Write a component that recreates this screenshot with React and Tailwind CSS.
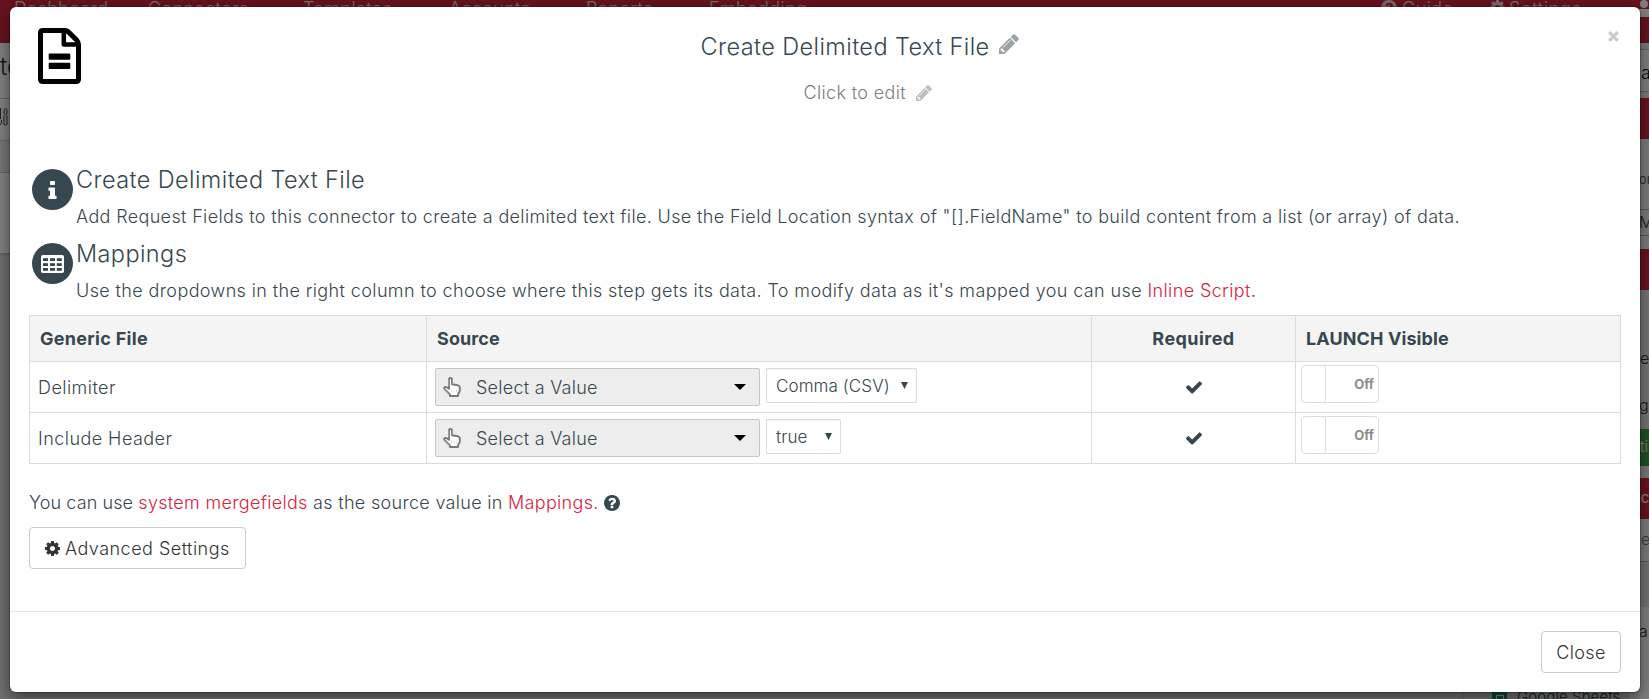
const PATHS = {
  pencil:
    'M491 1536l91-91-235-235-91 91v107h128v128h107zm523-928q0-22-22-22-10 0-17 7l-542 542q-7 7-7 17 0 22 22 22 10 0 17-7l542-542q7-7 7-17zm-54-192l416 416-832 832h-416v-416zm683 96q0 53-37 90l-166 166-416-416 166-165q36-38 90-38 53 0 91 38l235 234q37 39 37 91z',
  check:
    'M1671 566q0 40-28 68l-724 724-136 136q-28 28-68 28t-68-28l-136-136-362-362q-28-28-28-68t28-68l136-136q28-28 68-28t68 28l294 295 656-657q28-28 68-28t68 28l136 136q28 28 28 68z',
  cog: 'M1152 896q0-106-75-181t-181-75-181 75-75 181 75 181 181 75 181-75 75-181zm512-109v222q0 12-8 23t-20 13l-185 28q-19 54-39 91 35 50 107 138 10 12 10 25t-9 23q-27 37-99 108t-94 71q-12 0-26-9l-138-108q-44 23-91 38-16 136-29 186-7 28-36 28h-222q-14 0-24.500-8.500t-11.500-21.500l-28-184q-49-16-90-37l-141 107q-10 9-25 9-14 0-25-11-126-114-165-168-7-10-7-23 0-12 8-23 15-21 51-66.500t54-70.500q-27-50-41-99l-183-27q-13-2-21-12.500t-8-23.500v-222q0-12 8-23t19-13l186-28q14-46 39-92-40-57-107-138-10-12-10-24 0-10 9-23 26-36 98.500-107.500t94.500-71.500q13 0 26 10l138 107q44-23 91-38 16-136 29-186 7-28 36-28h222q14 0 24.500 8.500t11.500 21.500l28 184q49 16 90 37l142-107q9-9 24-9 13 0 25 10 129 119 165 170 7 8 7 22 0 12-8 23-15 21-51 66.500t-54 70.500q26 50 41 98l183 28q13 2 21 12.500t8 23.500z',
  question:
    'M1024 1376v-192q0-14-9-23t-23-9h-192q-14 0-23 9t-9 23v192q0 14 9 23t23 9h192q14 0 23-9t9-23zm256-672q0-88-55.500-163t-138.500-116-170-41q-243 0-371 213-15 24 8 42l132 100q7 6 19 6 16 0 25-12 53-68 86-92 34-24 86-24 48 0 85.500 26t37.500 59q0 38-20 61t-68 45q-63 28-115.500 86.500t-52.500 125.500v36q0 14 9 23t23 9h192q14 0 23-9t9-23q0-19 21.500-49.500t54.500-49.500q32-18 49-28.500t46-35 44.500-48 28-60.500 12.500-81zm384 192q0 209-103 385.500t-279.500 279.500-385.500 103-385.500-103-279.500-279.500-103-385.500 103-385.500 279.500-279.500 385.500-103 385.500 103 279.500 279.500 103 385.500z',
  info: 'M1216 1344v128q0 26-19 45t-45 19h-512q-26 0-45-19t-19-45v-128q0-26 19-45t45-19h64v-384h-64q-26 0-45-19t-19-45v-128q0-26 19-45t45-19h384q26 0 45 19t19 45v576h64q26 0 45 19t19 45zm-128-1152v192q0 26-19 45t-45 19h-256q-26 0-45-19t-19-45v-192q0-26 19-45t45-19h256q26 0 45 19t19 45z',
};

function Icon({ name, className, box = '0 0 1792 1792' }) {
  return (
    <svg viewBox={box} fill="currentColor" className={`shrink-0 ${className}`}>
      <path d={PATHS[name]} />
    </svg>
  );
}

function FileIcon() {
  return (
    <svg viewBox="0 0 43 56" className="h-14 w-[43px] shrink-0" fill="none" stroke="#000">
      <path
        strokeWidth="5"
        d="M5 2.500H27Q29 2.500 30.500 4L38.500 12Q40.500 14 40.500 16.500V51Q40.500 53.500 38 53.500H5Q2.500 53.500 2.500 51V5Q2.500 2.500 5 2.500Z"
      />
      <path strokeWidth="4.500" strokeLinejoin="round" d="M25.800 3V16.500H40" />
      <rect x="10.700" y="25.500" width="21.600" height="6.300" rx="1" fill="#000" stroke="none" />
      <rect x="10.700" y="34.800" width="21.600" height="6.300" rx="1" fill="#000" stroke="none" />
    </svg>
  );
}

function TableIcon() {
  return (
    <svg viewBox="0 0 23 18" className="h-[18px] w-[23px]">
      <rect width="23" height="18" rx="1.800" fill="#fff" />
      {[3.2, 8.2, 13].map((y) =>
        [2, 9, 15.8].map((x) => (
          <rect key={`${x}-${y}`} x={x} y={y} width="5" height="2.800" fill="#37474f" />
        ))
      )}
    </svg>
  );
}

function HandIcon() {
  return (
    <svg viewBox="0 0 18 20" className="h-5 w-[18px] shrink-0">
      <path
        d="M6 11.500V2.800Q6 1 7.500 1T9 2.800V7.200L14.800 8.300Q16.800 8.800 16.800 10.800V14L15 17.300V19H7V17.500L1.300 11.800Q.8 10.300 2.300 9.900Q3.500 9.800 6 11.800Z"
        fill="#fff"
        stroke="#77797c"
        strokeWidth="1.900"
        strokeLinejoin="round"
      />
      <path d="M1 12L6.500 17.600M5.600 2.500V9" stroke="#d9a679" strokeWidth=".7" fill="none" />
      <path d="M9.600 2.500V7" stroke="#8fb4e0" strokeWidth=".6" fill="none" />
      <path d="M8.500 12.500v3M11 12.500v3M13.500 12.500v3" stroke="#e0dcdc" strokeWidth="1" />
    </svg>
  );
}

function NavItem({ className, children }) {
  return <span className={`shrink-0 ${className}`}>{children}</span>;
}

function Backdrop() {
  return (
    <div className="flex h-full flex-col bg-[#dedede]">
      <nav className="flex h-[43px] shrink-0 bg-[#cf243a] pl-[14px] text-[18px] leading-[18px] font-light tracking-[0.35px] text-white/80">
        <NavItem className="w-[134px]">Dashboard</NavItem>
        <NavItem className="w-[155px]">Connectors</NavItem>
        <NavItem className="w-[146px]">Templates</NavItem>
        <NavItem className="w-[137px]">Accounts</NavItem>
        <NavItem className="w-[123px]">Reports</NavItem>
        <NavItem className="w-[672px]">Embedding</NavItem>
        <Icon name="question" box="128 128 1536 1536" className="h-4 w-4" />
        <NavItem className="ml-[5px] w-[88px]">Guide</NavItem>
        <Icon name="cog" box="128 128 1536 1536" className="h-[15px] w-[15px]" />
        <NavItem className="ml-1 w-[129px] tracking-[0.7px]">Settings</NavItem>
        <div className="flex w-4 flex-col items-center">
          <div className="h-2 w-2 rounded-full bg-white" />
          <div className="mt-px h-2 w-full bg-white" />
        </div>
      </nav>
      <div className="flex grow justify-between">
        <div className="flex w-[30px] flex-col text-[#263238]">
          <div className="h-[56px] overflow-hidden border-b border-[#c8c8c8] bg-white pt-2.5 text-2xl leading-7 font-light">to</div>
          <div className="h-[42px] border-b border-[#c8c8c8] bg-white pt-[9px]">
            <svg viewBox="0 0 10 18" className="h-[18px] w-[10px]" fill="none" stroke="#37474f">
              <path d="M.5 0v11M7 7.500v9q-1.500 1.500-3 0v-9M4 4q0-3.500 1.500-3.500t1.500 3.500-1.500 3-1.500-3M0 17l1.500-2v-3" />
            </svg>
          </div>
          <div className="h-8 border-b border-[#c8c8c8] bg-[#ebebeb]" />
          <div className="h-[81px] border-b border-[#bbb] bg-white shadow" />
        </div>
        <div className="flex w-[20px] flex-col overflow-hidden bg-[#f4f4f4] pl-[10px] text-[15px] font-light text-[#263238]">
          <div className="mt-1.5 h-[43px] border-y border-[#c8c8c8] bg-white pt-[13px] pl-0.5 text-lg leading-5 text-black">a</div>
          <div className="mt-1.5 h-[41px] bg-[#cf243a]" />
          <div className="h-[70px] pt-[30px] text-[13px] leading-5">on</div>
          <div className="h-[27px] border-y border-[#bbb] text-base leading-6">M</div>
          <div className="mt-[13px] h-[41px] bg-[#cf243a]" />
          <div className="h-[139px] bg-[#e8e8e8] pt-[58px] text-base leading-5">
            <div className="pl-px">e</div>
            <div className="mt-[27px]">ge</div>
          </div>
          <div className="h-[37px] bg-[#43a047] pt-2 pl-px leading-5 text-white">ti</div>
          <div className="mt-3 h-[41px] bg-[#cf243a] pt-2.5 leading-5 text-white">
            <div className="-ml-[7px] font-normal">ec</div>
          </div>
          <div className="h-[43px] border-b border-[#bbb] pt-2.5 pl-0.5 text-base leading-5 text-[#777]">e</div>
          <div className="h-[45px] bg-[#e4e4e4]" />
          <div className="h-[92px] bg-white pt-3 text-base leading-6">a</div>
        </div>
      </div>
    </div>
  );
}

function BottomStrip() {
  return (
    <div className="absolute top-[690px] left-[1463px] flex h-[9px] w-[186px] overflow-hidden border-l border-[#c8c8c8] pl-7 font-light">
      <div className="flex w-[15px] items-end justify-center bg-[#0f9d58]">
        <div className="h-1 w-2 border border-b-0 border-white" />
      </div>
      <span className="-mt-[5px] ml-[10px] text-[15px] leading-6 tracking-[0.1px] whitespace-nowrap text-[#263238]">
        Google Sheets
      </span>
    </div>
  );
}

function Section({ icon, title, children, textClass = '' }) {
  return (
    <section className="flex h-[74px] pl-[3px]">
      <div className="mt-[7px] mr-[3px] flex h-[41px] w-[41px] shrink-0 items-center justify-center rounded-full bg-[#37474f] text-white">
        {icon}
      </div>
      <div className="whitespace-nowrap">
        <h4 className="mt-[5px] text-[23.5px] leading-[26px] font-light tracking-[0.4px]">{title}</h4>
        <p className={`mt-[11px] leading-[26px] ${textClass}`}>{children}</p>
      </div>
    </section>
  );
}

function Cell({ className = '', children }) {
  return <div className={`flex border-r border-b border-[#dcdcdc] ${className}`}>{children}</div>;
}

function Row({ label, value, selectClass }) {
  return (
    <>
      <Cell className="items-center pt-px pl-2 tracking-[0.45px]">{label}</Cell>
      <Cell className="items-start pt-1.5 pl-2">
        <div className="flex h-[38px] w-[325px] items-center rounded-[2px] border border-[#c6c6c6] bg-[#ededed] pr-[13px] pl-[7px]">
          <HandIcon />
          <span className="ml-[15px] grow pt-px tracking-[0.25px]">Select a Value</span>
          <svg viewBox="0 0 12 6" className="mb-px h-1.5 w-3">
            <path d="M0 0H12L6 6Z" fill="#000" />
          </svg>
        </div>
        <div
          className={`ml-1.5 flex h-[35px] items-center justify-between rounded-[1px] border border-[#dcdcdc] bg-white pr-2 pl-[9px] text-[17px] tracking-[0.1px] shadow-[inset_0_1px_1px_rgba(0,0,0,0.06)] ${selectClass}`}
        >
          <span className="pt-0.5">{value}</span>
          <svg viewBox="0 0 7 7" className="h-[7px] w-[7px]">
            <path d="M0 0H7L3.500 7Z" fill="#37474f" />
          </svg>
        </div>
      </Cell>
      <Cell className="items-center justify-center">
        <Icon name="check" box="121 334 1550 1188" className="h-[13px] w-4" />
      </Cell>
      <Cell className="items-start pt-[3px] pl-[5px]">
        <div className="flex h-[38px] w-[78px] rounded-[4px] border border-[#dcdcdc] bg-white">
          <div className="h-full w-6 rounded-[3px] border-r border-[#dcdcdc]" />
          <div className="grow pr-1 text-right text-[13px] leading-[36px] font-bold tracking-normal text-[#8c8c8c]">
            Off
          </div>
        </div>
      </Cell>
    </>
  );
}

function Modal() {
  return (
    <div className="absolute top-[7px] left-[10px] flex h-[685px] w-[1630px] flex-col rounded-[6px] bg-white text-[18px] font-light tracking-[0.35px] text-[#37474f] shadow-[0_5px_15px_rgba(0,0,0,0.5),0_0_0_1px_rgba(0,0,0,0.2)]">
      <header className="flex h-[155px] shrink-0 pt-[21px] pl-[27.5px]">
        <FileIcon />
        <div className="ml-[620px] grow">
          <div className="flex items-center text-[23.5px] leading-[26px] tracking-[0.4px]">
            <span className="mt-1.5">Create Delimited Text File</span>
            <Icon name="pencil" box="128 128 1536 1536" className="ml-[9px] h-5 w-5 text-[#9ba3a7]" />
          </div>
          <div className="mt-[19px] flex items-center pl-[103px] leading-[26px] text-[#7d7d7d]">
            <span className="pt-px">Click to edit</span>
            <Icon name="pencil" box="128 128 1536 1536" className="ml-[10px] h-4 w-4 text-[#bdbdbd]" />
          </div>
        </div>
        <svg viewBox="0 0 11 11" className="mt-[3px] mr-[21.5px] h-[11px] w-[11px]">
          <path d="M1.200 1.200L9.800 9.800M9.800 1.200L1.200 9.800" stroke="#ccc" strokeWidth="3.200" />
        </svg>
      </header>
      <main className="grow px-[19px]">
        <Section icon={<Icon name="info" box="576 128 640 1408" className="h-[18px] w-[9px]" />} title="Create Delimited Text File">
          Add Request Fields to this connector to create a delimited text file. Use the Field Location syntax of
          &quot;[].FieldName&quot; to build content from a list (or array) of data.
        </Section>
        <Section icon={<TableIcon />} title="Mappings" textClass="tracking-[0.385px]">
          Use the dropdowns in the right column to choose where this step gets its data. To modify data as it&apos;s
          mapped you can use <a className="text-[#dc213c]">Inline Script</a>.
        </Section>
        <div className="mt-[5px] grid w-[1592px] grid-cols-[397px_665px_204px_325px] grid-rows-[46px_51px_51px] border-t border-l border-[#dcdcdc]">
          <Cell className="items-center bg-[#f4f4f4] pl-[10px] font-bold tracking-[0.3px]">Generic File</Cell>
          <Cell className="items-center bg-[#f4f4f4] pl-[10px] font-bold tracking-[0.1px]">Source</Cell>
          <Cell className="items-center justify-center bg-[#f4f4f4] font-bold tracking-[0.45px]">Required</Cell>
          <Cell className="items-center bg-[#f4f4f4] pl-[10px] font-bold tracking-[0.1px]">LAUNCH Visible</Cell>
          <Row label="Delimiter" value="Comma (CSV)" selectClass="w-[151px]" />
          <Row label="Include Header" value="true" selectClass="w-[75px]" />
        </div>
        <p className="mt-[25px] flex items-center leading-[26px] tracking-[0.31px]">
          <span className="pt-px">
            <span className="tracking-[0.1px]">You can use </span>
            <a className="text-[#dc213c]">system mergefields</a> as the source value in{' '}
            <a className="text-[#dc213c]">Mappings.</a>
          </span>
          <Icon name="question" box="128 128 1536 1536" className="ml-[5px] h-4 w-4" />
        </p>
        <button className="mt-[11px] flex h-[42px] w-[217px] items-center rounded-[4px] border border-[#ccc] bg-white pl-[15px] tracking-[0.47px] text-[#333]">
          <Icon name="cog" box="128 128 1536 1536" className="h-[15px] w-[15px]" />
          <span className="ml-[5px] pt-px">Advanced Settings</span>
        </button>
      </main>
      <footer className="flex h-[81px] shrink-0 justify-end border-t border-[#e5e5e5] pt-[19px] pr-[19px]">
        <button className="h-[42px] w-20 rounded-[4px] border border-[#ccc] bg-white pt-px text-[#333]">Close</button>
      </footer>
    </div>
  );
}

export default function App() {
  return (
    <div className="relative h-[699px] w-full overflow-hidden bg-white font-['Inter','Liberation_Sans',sans-serif]">
      <Backdrop />
      <BottomStrip />
      <div className="absolute inset-0 bg-black/50" />
      <Modal />
    </div>
  );
}
